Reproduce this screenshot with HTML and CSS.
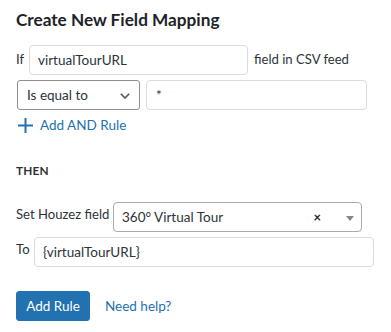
FILE: index.html
```html
<!DOCTYPE html>
<html>
<head>
<meta charset="utf-8">
<link rel="stylesheet" href="styles.css">
</head>
<body>
<div class="panel">
  <h2 class="title">Create New Field Mapping</h2>
  <div class="row row-if">
    <span class="lbl lbl-if">If</span>
    <div class="input input-field">virtualTourURL</div>
    <span class="lbl lbl-after">field in CSV feed</span>
  </div>
  <div class="row row-cond">
    <div class="select">
      <span>Is equal to</span>
      <svg class="chev" width="10" height="6" viewBox="0 0 10 6"><path d="M0.8 0.8L5 5L9.2 0.8" fill="none" stroke="#50575e" stroke-width="1.6"/></svg>
    </div>
    <div class="input input-val">*</div>
  </div>
  <a class="add-and">
    <svg width="15" height="15" viewBox="0 0 15 15"><path d="M7.5 0v15M0 7.5h15" stroke="#2271b1" stroke-width="2"/></svg>
    <span>Add AND Rule</span>
  </a>
  <div class="then">THEN</div>
  <div class="row row-set">
    <span class="lbl lbl-set">Set Houzez field</span>
    <div class="select2">
      <span class="s2-text">360° Virtual Tour</span>
      <span class="s2-clear">×</span>
      <span class="s2-arrow"></span>
    </div>
  </div>
  <div class="row row-to">
    <span class="lbl lbl-to">To</span>
    <div class="input input-to">{virtualTourURL}</div>
  </div>
  <div class="actions">
    <button class="btn">Add Rule</button>
    <a class="help">Need help?</a>
  </div>
</div>
</body>
</html>
```
FILE: styles.css
```css
html, body { margin: 0; padding: 0; background: #fff; }
body { font-family: "Lato", "Noto Sans", sans-serif; font-size: 13.5px; color: #1d2327; }
.panel { padding: 7px 16px 0 16px; }
.title { font-size: 17.2px; font-weight: 700; margin: 0 0 12px 0; line-height: 26px; color: #1d2327; }
.row { display: flex; align-items: flex-start; }
.lbl { font-size: 13.1px; line-height: 20px; white-space: nowrap; color: #2c3338; }
.lbl-if { width: 13px; padding-top: 4px; }
.lbl-after { margin-left: 6px; padding-top: 4px; }
.lbl-set { width: 97px; padding-top: 2px; }
.lbl-to { width: 18px; padding-top: 2px; }
.input { box-sizing: border-box; height: 30px; border: 1px solid #dcdcde; border-radius: 4px; padding: 0 8px; line-height: 28px; color: #2c3338; background: #fff; }
.input-field { width: 219px; }
.row-cond { margin-top: 5px; }
.select { box-sizing: border-box; width: 123px; height: 30px; margin-left: 1px; border: 1px solid #8c8f94; border-radius: 3px; padding: 0 9px 0 9px; display: flex; align-items: center; justify-content: space-between; color: #2c3338; }
.chev { margin-top: 1px; }
.input-val { margin-left: 6px; width: 221px; padding-left: 9px; }
.add-and { display: flex; align-items: center; gap: 7px; margin-top: 8px; margin-left: 2px; color: #2271b1; height: 15px; line-height: 15px; }
.then { margin-top: 31px; font-weight: 700; font-size: 11.8px; letter-spacing: 0.2px; line-height: 14px; color: #2c3338; }
.row-set { margin-top: 24px; }
.select2 { box-sizing: border-box; width: 249px; height: 30px; border: 1px solid #aaa; border-radius: 4px; position: relative; display: flex; align-items: center; padding-left: 8px; }
.s2-text { flex: 1; color: #2c3338; }
.s2-clear { font-weight: 700; font-size: 13px; margin-right: 40px; color: #1d2327; line-height: 1; }
.s2-arrow { position: absolute; right: 7px; top: 13px; width: 0; height: 0; border-left: 4px solid transparent; border-right: 4px solid transparent; border-top: 5px solid #888; }
.row-to { margin-top: 5px; }
.input-to { width: 340px; }
.actions { display: flex; align-items: center; margin-top: 24px; }
.btn { box-sizing: border-box; height: 30px; width: 74px; background: #2271b1; color: #fff; border: 1px solid #2271b1; border-radius: 3px; font-family: inherit; font-size: 13.5px; padding: 0; }
.help { margin-left: 15px; color: #2271b1; }
```
